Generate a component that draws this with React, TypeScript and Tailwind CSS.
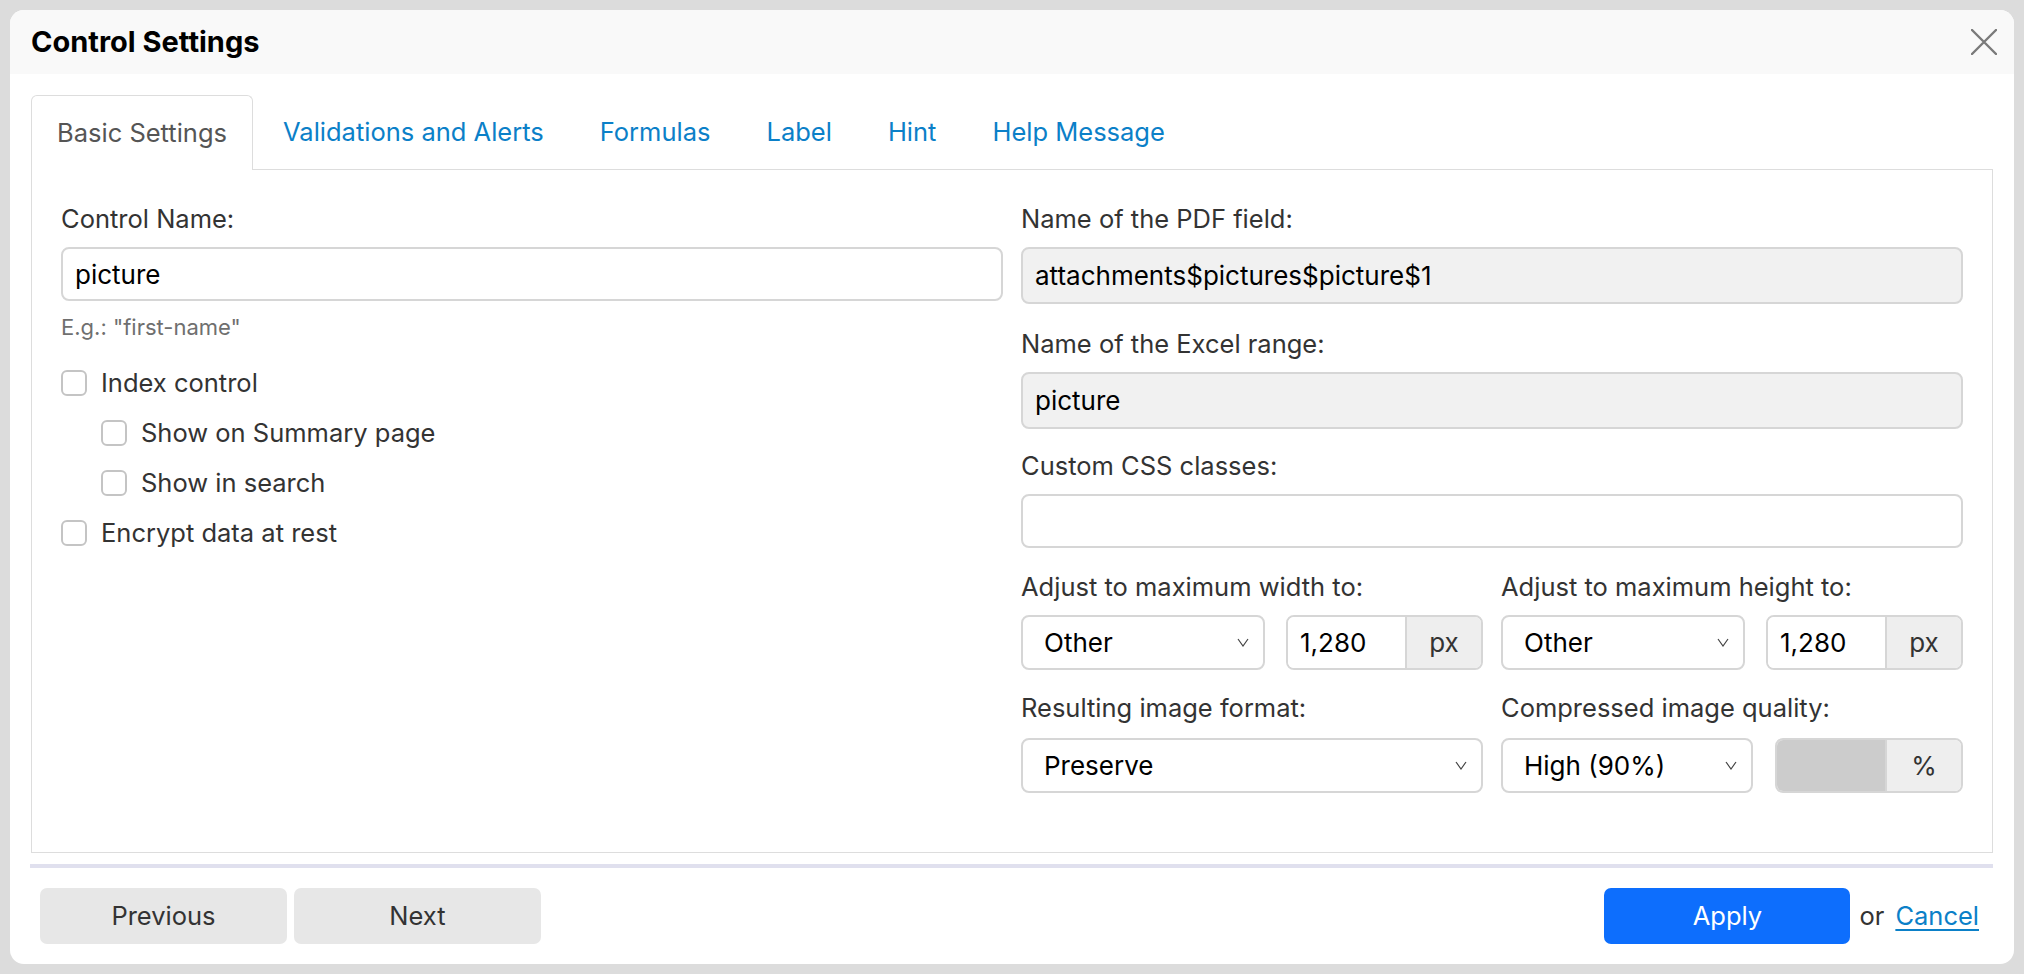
import React from 'react';

const tabs = ['Validations and Alerts', 'Formulas', 'Label', 'Hint', 'Help Message'];

function Chevron() {
  return (
    <svg width="12" height="9" viewBox="0 0 12 9" className="shrink-0">
      <polyline points="1,1 6,8 11,1" fill="none" stroke="#444" strokeWidth="1.2" />
    </svg>
  );
}

function Select({ value, className }: { value: string; className: string }) {
  return (
    <div
      className={`flex items-center justify-between bg-white border-2 border-[#d6d6d6] rounded-[8px] pl-[21px] pr-[14px] text-[26px] text-black ${className}`}
    >
      <span>{value}</span>
      <Chevron />
    </div>
  );
}

function Addon({ value, unit, disabled }: { value: string; unit: string; disabled?: boolean }) {
  return (
    <div className="flex-1 flex h-[55px] border-2 border-[#d6d6d6] rounded-[8px] overflow-hidden text-[26px]">
      <div className={`flex-1 flex items-center pl-[12px] text-black ${disabled ? 'bg-[#cccccc]' : 'bg-white'}`}>
        {value}
      </div>
      <div className="w-[76px] flex items-center justify-center bg-[#eeeeee] border-l-2 border-[#d6d6d6] text-[#333]">
        {unit}
      </div>
    </div>
  );
}

function Check({ label, indent }: { label: string; indent?: boolean }) {
  return (
    <div className={`h-[50px] flex items-center gap-[14px] ${indent ? 'pl-[40px]' : ''}`}>
      <span className="w-[26px] h-[26px] border-2 border-[#c4c4c4] rounded-[6px] bg-white" />
      <span className="text-[25.5px] text-[#333]">{label}</span>
    </div>
  );
}

function Label({ children, mb = 'mb-[10px]' }: { children: React.ReactNode; mb?: string }) {
  return <div className={`h-9 leading-9 text-[25.5px] text-[#333] ${mb}`}>{children}</div>;
}

export default function App() {
  return (
    <div className="h-screen bg-[#dcdcdc] p-[10px] font-['Inter',sans-serif]">
      <div className="h-full bg-white rounded-[14px] flex flex-col overflow-hidden">
        {/* Header */}
        <header className="h-16 shrink-0 bg-[#f9f9f9] flex items-center justify-between pl-[21px] pr-[17px]">
          <h1 className="text-[29px] font-bold text-black">Control Settings</h1>
          <svg width="26" height="26" viewBox="0 0 26 26">
            <path d="M1 1 L25 25 M25 1 L1 25" stroke="#7a7a7a" strokeWidth="2.4" strokeLinecap="round" />
          </svg>
        </header>

        {/* Tabs */}
        <div className="px-[21px] pt-[21px]">
          <nav className="h-[74px] flex items-start gap-[4px]">
            <div className="relative z-10 h-[75px] px-[25px] flex items-center bg-white border border-b-0 border-[#dddddd] rounded-t-[6px] text-[25.5px] text-[#555]">
              Basic Settings
            </div>
            {tabs.map((t) => (
              <div key={t} className="h-[74px] px-[26px] flex items-center text-[25.5px] text-[#0b80c8]">
                {t}
              </div>
            ))}
          </nav>

          {/* Panel */}
          <div className="h-[684px] border border-[#dddddd] px-[29px] pt-[31px] grid grid-cols-2 gap-x-[18px] items-start">
            {/* Left column */}
            <div>
              <Label>Control Name:</Label>
              <div className="h-[54px] flex items-center border-2 border-[#d6d6d6] rounded-[8px] pl-[12px] text-[26px] text-black">
                picture
              </div>
              <div className="mt-[13px] h-[26px] leading-[26px] text-[22px] text-[#6f6f6f]">E.g.: "first-name"</div>
              <div className="mt-[18px]">
                <Check label="Index control" />
                <Check label="Show on Summary page" indent />
                <Check label="Show in search" indent />
                <Check label="Encrypt data at rest" />
              </div>
            </div>

            {/* Right column */}
            <div>
              <Label>Name of the PDF field:</Label>
              <div className="h-[57px] flex items-center bg-[#f1f1f1] border-2 border-[#d6d6d6] rounded-[8px] pl-[12px] text-[26px] text-black">
                attachments$pictures$picture$1
              </div>
              <div className="mt-[22px]">
                <Label>Name of the Excel range:</Label>
              </div>
              <div className="h-[57px] flex items-center bg-[#f1f1f1] border-2 border-[#d6d6d6] rounded-[8px] pl-[12px] text-[26px] text-black">
                picture
              </div>
              <div className="mt-[19px]">
                <Label>Custom CSS classes:</Label>
              </div>
              <div className="h-[54px] bg-white border-2 border-[#d6d6d6] rounded-[8px]" />

              <div className="mt-[21px] grid grid-cols-2 gap-x-[18px]">
                <div>
                  <Label>Adjust to maximum width to:</Label>
                  <div className="flex gap-[21px]">
                    <Select value="Other" className="w-[244px] h-[55px]" />
                    <Addon value="1,280" unit="px" />
                  </div>
                </div>
                <div>
                  <Label>Adjust to maximum height to:</Label>
                  <div className="flex gap-[21px]">
                    <Select value="Other" className="w-[244px] h-[55px]" />
                    <Addon value="1,280" unit="px" />
                  </div>
                </div>
              </div>

              <div className="mt-[20px] grid grid-cols-2 gap-x-[18px]">
                <div>
                  <Label mb="mb-[12px]">Resulting image format:</Label>
                  <Select value="Preserve" className="w-full h-[55px]" />
                </div>
                <div>
                  <Label mb="mb-[12px]">Compressed image quality:</Label>
                  <div className="flex gap-[22px]">
                    <Select value="High (90%)" className="w-[252px] h-[55px]" />
                    <Addon value="" unit="%" disabled />
                  </div>
                </div>
              </div>
            </div>
          </div>
        </div>

        {/* Separator */}
        <div className="ml-[20px] mr-[21px] mt-[11px] h-[4px] bg-[#e0e0ee]" />

        {/* Footer */}
        <footer className="mt-[20px] flex items-center justify-between pl-[30px] pr-[35px]">
          <div className="flex gap-[7px]">
            <button className="w-[247px] h-[56px] rounded-[7px] bg-[#e7e7e7] text-[25.5px] text-[#333]">Previous</button>
            <button className="w-[247px] h-[56px] rounded-[7px] bg-[#e7e7e7] text-[25.5px] text-[#333]">Next</button>
          </div>
          <div className="flex items-center">
            <button className="w-[246px] h-[56px] rounded-[7px] bg-[#0d6efd] text-[25.5px] text-white">Apply</button>
            <span className="ml-[9px] text-[25.5px] text-[#333]">or</span>
            <a className="ml-[11px] text-[25.5px] text-[#0b80c8] underline underline-offset-4">Cancel</a>
          </div>
        </footer>
      </div>
    </div>
  );
}
